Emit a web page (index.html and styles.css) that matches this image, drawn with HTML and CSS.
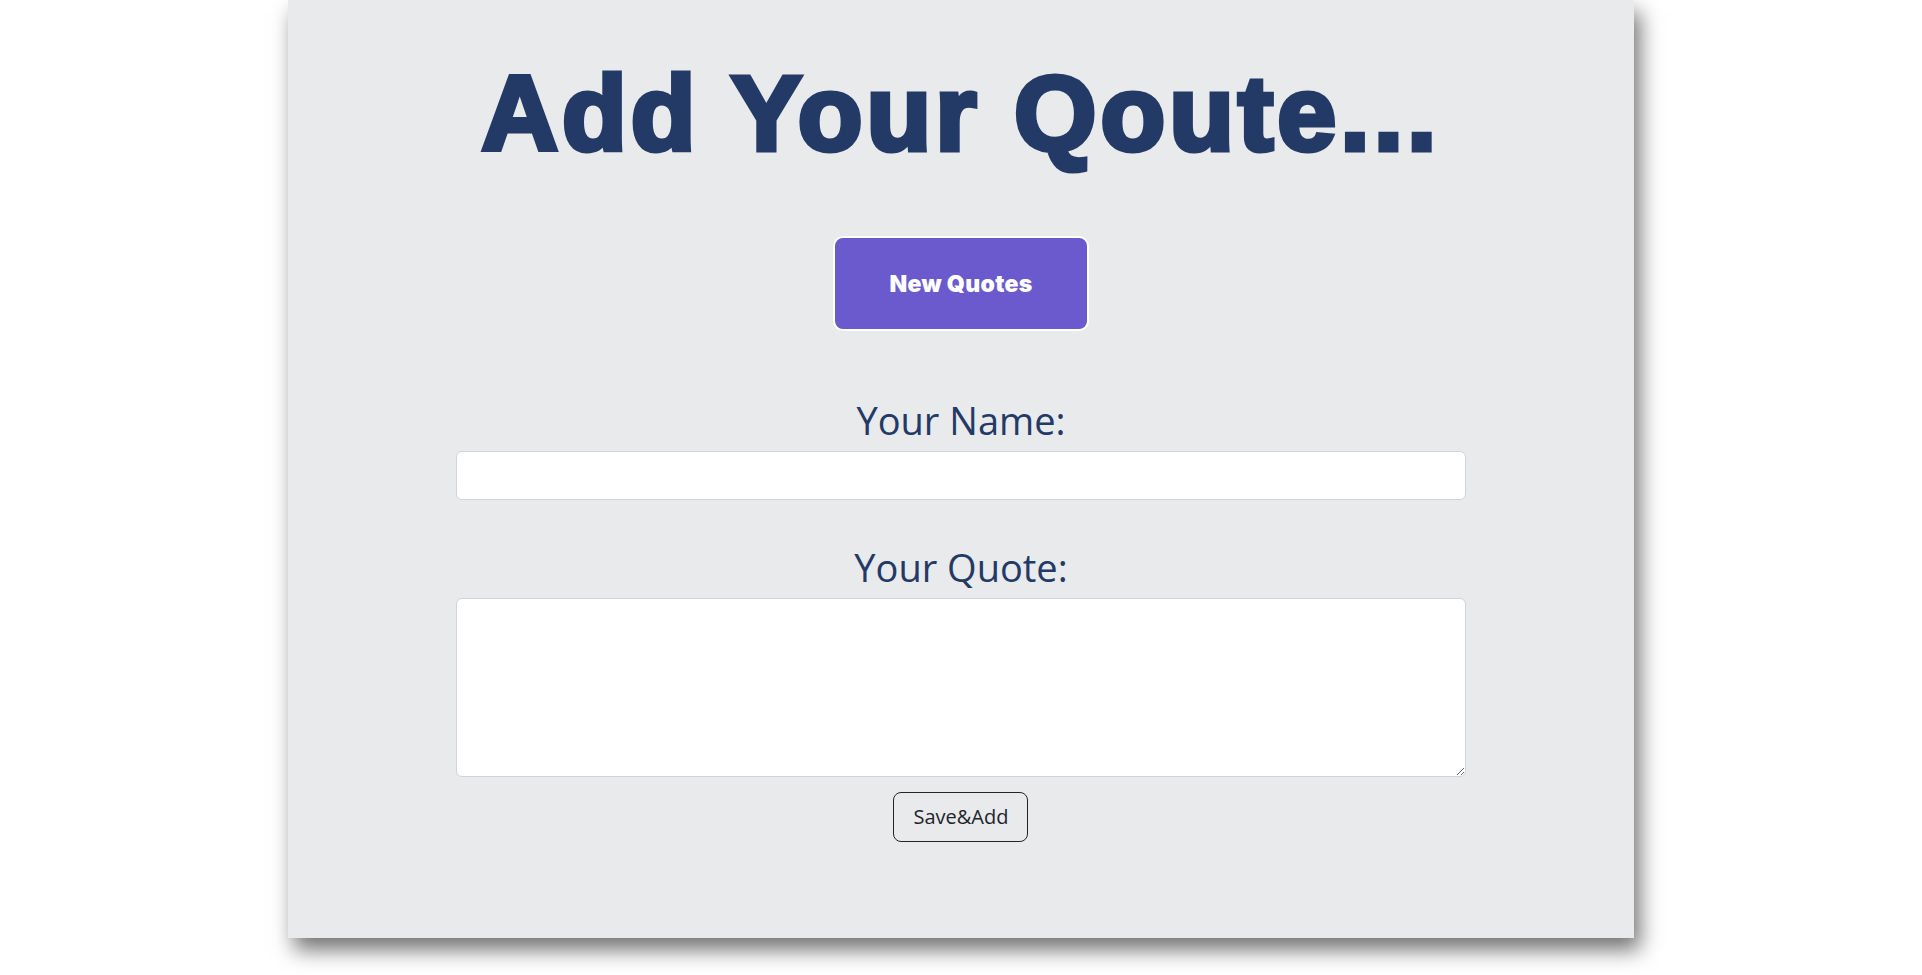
FILE: index.html
```html
<!DOCTYPE html>
<html lang="en">
<head>
<meta charset="utf-8">
<title>Add Your Qoute</title>
<link rel="stylesheet" href="styles.css">
</head>
<body>
  <main class="card">
    <h1 class="title">Add Your Qoute...</h1>
    <button class="new-btn" type="button">New Quotes</button>
    <form class="quote-form">
      <label class="field-label" for="name">Your Name:</label>
      <input class="field-input" id="name" type="text">
      <label class="field-label second" for="quote">Your Quote:</label>
      <textarea class="field-area" id="quote"></textarea>
      <button class="save-btn" type="button">Save&amp;Add</button>
    </form>
  </main>
</body>
</html>
```
FILE: styles.css
```css
html, body {
  margin: 0;
  padding: 0;
  background: #ffffff;
}

body {
  font-family: "Open Sans", "Noto Sans", sans-serif;
  min-height: 975px;
}

.card {
  box-sizing: border-box;
  width: 70%;
  margin: 0 auto;
  height: 938px;
  padding: 50px 0 0;
  background: #e9eaec;
  box-shadow: 6px 12px 20px rgba(0, 0, 0, 0.55);
  display: flex;
  flex-direction: column;
  align-items: center;
}

.title {
  margin: 0;
  font-family: "Liberation Sans", Arial, sans-serif;
  font-weight: 700;
  font-size: 106px;
  line-height: 127px;
  letter-spacing: 4px;
  color: #233a67;
  -webkit-text-stroke: 5px #233a67;
  text-align: center;
}

.new-btn {
  margin-top: 59px;
  box-sizing: border-box;
  width: 256px;
  height: 95px;
  background: #6a5acd;
  border: 2px solid #ffffff;
  border-radius: 10px;
  color: #ffffff;
  font-family: Inter, "Liberation Sans", sans-serif;
  font-weight: 900;
  font-size: 23px;
  line-height: 28px;
  letter-spacing: 0.3px;
  padding: 0;
  cursor: pointer;
}

.quote-form {
  width: 75%;
  margin-top: 66px;
  display: flex;
  flex-direction: column;
  align-items: center;
}

.field-label {
  display: block;
  font-size: 38px;
  line-height: 46px;
  font-weight: 400;
  color: #233a66;
  margin-bottom: 8px;
}

.field-label.second {
  margin-top: 44px;
}

.field-input,
.field-area {
  box-sizing: border-box;
  width: 100%;
  background: #ffffff;
  border: 1px solid #ced4da;
  border-radius: 6px;
  font-family: "Open Sans", sans-serif;
  font-size: 20px;
  padding: 8px 16px;
  color: #212529;
}

.field-input {
  height: 49px;
}

.field-area {
  height: 179px;
  display: block;
}

.save-btn {
  margin-top: 15px;
  box-sizing: border-box;
  height: 50px;
  padding: 0 19px;
  background: transparent;
  border: 1px solid #212529;
  border-radius: 8px;
  color: #212529;
  font-family: "Open Sans", sans-serif;
  font-size: 20px;
  line-height: 30px;
  cursor: pointer;
}
```
